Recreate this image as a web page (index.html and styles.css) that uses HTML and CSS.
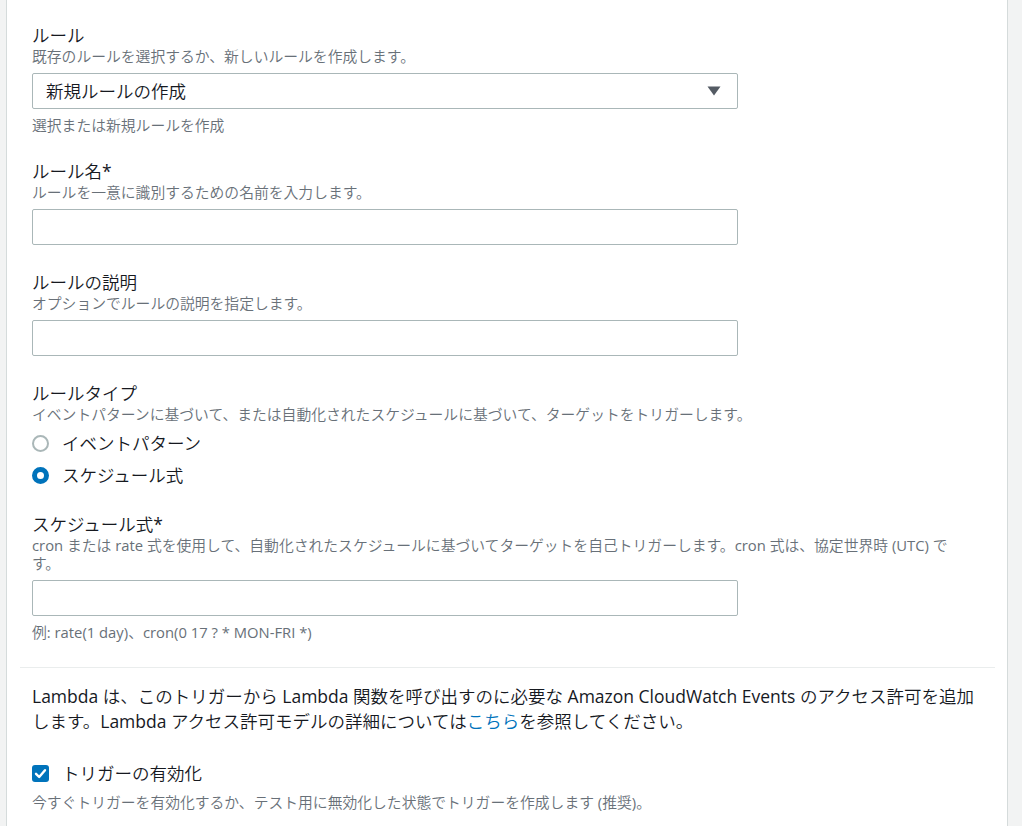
FILE: index.html
```html
<!DOCTYPE html>
<html lang="ja">
<head>
<meta charset="utf-8">
<title>トリガーの設定</title>
<link rel="stylesheet" href="styles.css">
</head>
<body>
<div class="page">
  <div class="card">
    <section class="section">
      <div class="field">
        <div class="label">ルール</div>
        <div class="desc">既存のルールを選択するか、新しいルールを作成します。</div>
        <div class="control select">
          <span class="select-value">新規ルールの作成</span>
          <svg class="caret" width="14" height="10" viewBox="0 0 14 10"><polygon points="0.5,0.5 13.5,0.5 7,9.5" fill="#545b64"/></svg>
        </div>
        <div class="hint">選択または新規ルールを作成</div>
      </div>

      <div class="field">
        <div class="label">ルール名<span class="en">*</span></div>
        <div class="desc">ルールを一意に識別するための名前を入力します。</div>
        <input class="control" type="text">
      </div>

      <div class="field">
        <div class="label">ルールの説明</div>
        <div class="desc">オプションでルールの説明を指定します。</div>
        <input class="control" type="text">
      </div>

      <div class="field">
        <div class="label">ルールタイプ</div>
        <div class="desc">イベントパターンに基づいて、または自動化されたスケジュールに基づいて、ターゲットをトリガーします。</div>
        <div class="radios">
          <div class="radio-row"><span class="radio"></span><span class="option">イベントパターン</span></div>
          <div class="radio-row"><span class="radio checked"></span><span class="option">スケジュール式</span></div>
        </div>
      </div>

      <div class="field">
        <div class="label">スケジュール式<span class="en">*</span></div>
        <div class="desc"><span class="en">cron</span> または <span class="en">rate</span> 式を使用して、自動化されたスケジュールに基づいてターゲットを自己トリガーします。<span class="en">cron</span> 式は、協定世界時 <span class="en">(UTC)</span> で<br>す。</div>
        <input class="control" type="text">
        <div class="hint">例<span class="en">: rate(1 day)</span>、<span class="en">cron(0 17 ? * MON-FRI *)</span></div>
      </div>
    </section>

    <div class="divider"></div>

    <section class="section bottom">
      <p class="para"><span class="en">Lambda</span> は、このトリガーから <span class="en">Lambda</span> 関数を呼び出すのに必要な <span class="en">Amazon CloudWatch Events</span> のアクセス許可を追加します。<span class="en">Lambda</span> アクセス許可モデルの詳細については<a class="link" href="#">こちら</a>を参照してください。</p>
      <div class="check-row">
        <span class="checkbox"><svg width="17" height="17" viewBox="0 0 17 17"><path d="M4 8.8 L7.2 12 L13 5.2" fill="none" stroke="#fff" stroke-width="2.4" stroke-linecap="round" stroke-linejoin="round"/></svg></span>
        <span class="option">トリガーの有効化</span>
      </div>
      <div class="desc check-desc">今すぐトリガーを有効化するか、テスト用に無効化した状態でトリガーを作成します <span class="en">(</span>推奨<span class="en">)</span>。</div>
    </section>
  </div>
</div>
</body>
</html>
```

FILE: styles.css
```css
html, body {
  margin: 0;
  padding: 0;
}

body {
  background: #f2f3f3;
  font-family: "Open Sans", "Noto Sans CJK JP", sans-serif;
  font-weight: 350;
  color: #16191f;
}

.en {
  font-weight: 400;
}

.page {
  padding: 0 14px 0 6px;
}

.card {
  background: #ffffff;
  border-left: 1px solid #d5dbdb;
  border-right: 1px solid #d5dbdb;
  padding: 0 12px 0 13px;
  min-height: 826px;
  box-sizing: border-box;
}

.section {
  padding: 23px 12px 0 12px;
}

.section.bottom {
  padding-top: 16px;
}

.field + .field {
  margin-top: 25px;
}

.label {
  font-size: 17.5px;
  line-height: 24px;
}

.desc {
  font-size: 14.8px;
  line-height: 18px;
  color: #687078;
}

.hint {
  margin-top: 7px;
  font-size: 14.8px;
  line-height: 18px;
  color: #687078;
}

.control {
  display: block;
  margin-top: 8px;
  width: 706px;
  height: 36px;
  box-sizing: border-box;
  border: 1px solid #aab7b8;
  border-radius: 2px;
  background: #fff;
  font: inherit;
  outline: none;
}

.select {
  display: flex;
  align-items: center;
  justify-content: space-between;
  padding: 0 16px 0 13px;
}

.select-value {
  font-size: 17.5px;
  line-height: 24px;
  color: #16191f;
}

.caret {
  display: block;
}

.radios {
  margin-top: 8px;
  display: flex;
  flex-direction: column;
  gap: 8px;
}

.radio-row,
.check-row {
  display: flex;
  align-items: center;
  height: 24px;
}

.radio {
  width: 17px;
  height: 17px;
  box-sizing: border-box;
  border: 2px solid #aab7b8;
  border-radius: 50%;
  background: #fff;
  margin-right: 13px;
  flex: none;
}

.radio.checked {
  border: 5px solid #0073bb;
}

.option {
  font-size: 17.5px;
  line-height: 24px;
}

.divider {
  height: 1px;
  background: #eaeded;
  margin-top: 26px;
}

.para {
  margin: 0;
  font-size: 17.5px;
  line-height: 25px;
  max-width: 945px;
}

.link {
  color: #0073bb;
  text-decoration: none;
}

.check-row {
  margin-top: 27px;
}

.checkbox {
  width: 17px;
  height: 17px;
  border-radius: 3px;
  background: #0073bb;
  margin-right: 13px;
  flex: none;
  display: flex;
}

.check-desc {
  margin-top: 8px;
}
```
